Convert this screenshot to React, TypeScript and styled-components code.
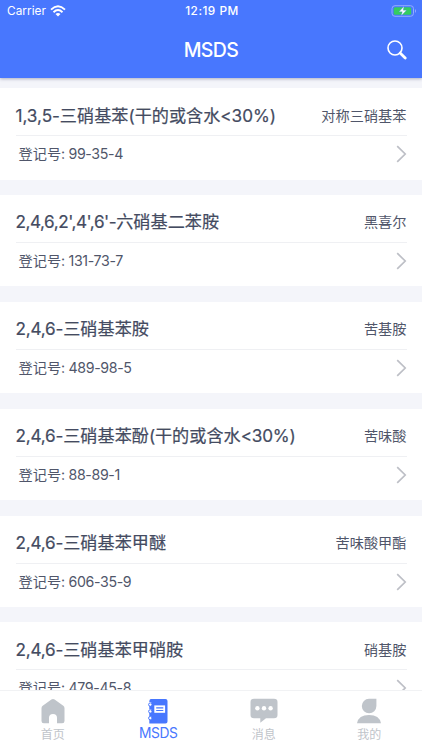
import React from 'react';
import styled, { createGlobalStyle } from 'styled-components';

const GlobalStyle = createGlobalStyle`
  *, *::before, *::after { box-sizing: border-box; }
  html, body, #root { height: 100%; margin: 0; }
  body {
    overflow: hidden;
    font-family: Inter, "Noto Sans CJK SC", sans-serif;
    background: #f4f5fa;
  }
`;

const Screen = styled.div`
  display: flex;
  flex-direction: column;
  width: 422px;
  height: 750px;
  overflow: hidden;
  background: #f4f5fa;
`;

const Header = styled.header`
  flex: none;
  height: 78px;
  color: #fff;
  background: #4877fe;
  box-shadow: 0 1px 3px rgba(40, 50, 90, 0.35);
  z-index: 1;
`;

const StatusBar = styled.div`
  display: grid;
  grid-template-columns: 1fr auto 1fr;
  align-items: center;
  height: 22px;
  padding: 0 5px 0 7px;
  font-size: 11.8px;
  line-height: 22px;
`;

const Carrier = styled.div`
  display: flex;
  align-items: center;
  gap: 4px;
  letter-spacing: 0.05px;
`;

const Clock = styled.div`
  font-weight: 500;
  letter-spacing: 0.5px;
`;

const BatterySlot = styled.div`
  display: flex;
  justify-content: flex-end;
`;

const NavBar = styled.div`
  display: grid;
  grid-template-columns: 1fr auto 1fr;
  align-items: center;
  height: 55px;
  padding: 0 15px;
`;

const NavTitle = styled.h1`
  grid-column: 2;
  margin: 0;
  font-size: 19.5px;
  font-weight: 500;
  letter-spacing: -0.6px;
`;

const IconButton = styled.button`
  justify-self: end;
  display: flex;
  padding: 0;
  border: 0;
  background: none;
`;

const List = styled.main`
  flex: 1;
  min-height: 0;
  display: flex;
  flex-direction: column;
  gap: 15.3px;
  padding-top: 10px;
  overflow: hidden;
`;

const Card = styled.article`
  flex: none;
  height: 91.6px;
  padding: 0 15.5px;
  background: #fff;
  color: #444b61;
`;

const CardHead = styled.div`
  display: flex;
  align-items: center;
  justify-content: space-between;
  height: 48px;
  padding-top: 8px;
  border-bottom: 1px solid #eff0f3;
`;

const Name = styled.h2`
  margin: 0;
  font-size: 17.15px;
  font-weight: 400;
  line-height: 24px;
  white-space: nowrap;
  -webkit-text-stroke: 0.2px currentColor;
`;

const Latin = styled.span<{ $tracking: number }>`
  letter-spacing: ${(p) => p.$tracking}px;
`;

const Alias = styled.span`
  font-size: 14.2px;
  line-height: 20px;
  color: #50566a;
`;

const CardBody = styled.div`
  display: flex;
  align-items: center;
  justify-content: space-between;
  height: 36px;
  padding-left: 3px;
  font-size: 14.2px;
  line-height: 20px;
  color: #50566a;
`;

const TabBar = styled.nav`
  flex: none;
  display: grid;
  grid-template-columns: repeat(4, 1fr);
  height: 60px;
  background: #fff;
  border-top: 1px solid #f1f2f4;
`;

const Tab = styled.a<{ $active?: boolean }>`
  display: flex;
  flex-direction: column;
  align-items: center;
  padding-top: 7px;
  color: ${(p) => (p.$active ? '#4877fe' : '#bfc4ca')};
`;

const TabLabel = styled.span<{ $large?: boolean }>`
  font-size: ${(p) => (p.$large ? 13.8 : 12)}px;
  line-height: 18px;
  letter-spacing: ${(p) => (p.$large ? -0.35 : 0)}px;
  margin-top: ${(p) => (p.$large ? -0.5 : 1.5)}px;
`;

const WifiIcon = () => (
  <svg width="16" height="12" viewBox="0 0 16 12" fill="none" stroke="#fff" strokeWidth="1.9">
    <path d="M1 4.6Q8-2 15 4.6M3.5 7.2Q8 3 12.5 7.2" />
    <path d="M8 11.6L5.5 9Q8 7 10.5 9Z" fill="#fff" stroke="none" />
  </svg>
);

const BatteryIcon = () => (
  <svg width="26" height="12" viewBox="0 0 26 12">
    <rect x="1" y="0.7" width="21.5" height="10.6" rx="3" fill="none" stroke="#93adff" strokeWidth="1" />
    <path d="M24 4Q26 6 24 8Z" fill="#93adff" />
    <rect x="2.7" y="2.2" width="17.5" height="7.6" rx="1.5" fill="#35cc60" />
    <path d="M13 1.3L8 6.8H11.3L10.2 10.8L15.5 5.2H12.2Z" fill="#fff" stroke="#4877fe" strokeWidth="0.3" />
  </svg>
);

const SearchIcon = () => (
  <svg width="20" height="20" viewBox="0 0 20 20" fill="none" stroke="#fff" strokeLinecap="round">
    <circle cx="8" cy="8" r="7" strokeWidth="1.6" />
    <path d="M13.1 13.1L18.2 18" strokeWidth="2.8" />
  </svg>
);

const Chevron = () => (
  <svg width="11" height="18" viewBox="0 0 11 18" fill="none" stroke="#bdbfc6" strokeWidth="1.7">
    <path d="M1.2 1.2L9.2 9L1.2 16.8" />
  </svg>
);

const HomeIcon = () => (
  <svg width="24" height="26" viewBox="0 0 24 26" fill="currentColor">
    <path d="M10.4 1.5Q12 .5 13.6 1.5L22.3 7.8Q23.5 8.7 23.5 10.2V23Q23.5 25.3 21.2 25.3H16V19.8Q16 16 12 16T8 19.8V25.3H2.8Q.5 25.3 .5 23V10.2Q.5 8.7 1.7 7.8Z" />
  </svg>
);

const NotebookIcon = () => (
  <svg width="20" height="26" viewBox="0 0 20 26">
    <path d="M3 1H17.5Q19.5 1 19.5 3V23.5Q19.5 25.5 17.5 25.5H1.3V21.5H3.2V18H1.3V14.8H3.2V11H1.3V7.8H3.2V4H1.3Q1.3 1 3 1Z" fill="currentColor" />
    <g fill="#fff" stroke="currentColor" strokeWidth="1">
      <circle cx="2.3" cy="6.6" r="1.7" />
      <circle cx="2.3" cy="13.4" r="1.7" />
      <circle cx="2.3" cy="20.1" r="1.7" />
    </g>
    <rect x="6.3" y="7.4" width="10.8" height="7.4" fill="#fff" />
    <path d="M8.2 9.9H15.3M8.2 12.5H15.3" stroke="currentColor" strokeWidth="1.1" />
  </svg>
);

const MessageIcon = () => (
  <svg width="28" height="26" viewBox="0 0 28 26">
    <path d="M4 .7H24Q27.5 .7 27.5 4V17Q27.5 20.2 24 20.2H16L10.3 24.8V20.2H4Q.5 20.2 .5 17V4Q.5 .7 4 .7Z" fill="currentColor" />
    <g fill="#fff">
      <circle cx="7.4" cy="10.3" r="2.2" />
      <circle cx="14" cy="10.3" r="2.2" />
      <circle cx="20.6" cy="10.3" r="2.2" />
    </g>
  </svg>
);

const ProfileIcon = () => (
  <svg width="24" height="26" viewBox="0 0 24 26" fill="currentColor">
    <path d="M12 .7H19.4V8A7.3 7.3 0 1 1 12 .7ZM0 25.3Q1.5 17 12 17T24 25.3Z" />
  </svg>
);

const items = [
  { name: '1,3,5-三硝基苯(干的或含水<30%)', alias: '对称三硝基苯', code: '99-35-4', tracking: -0.05 },
  { name: "2,4,6,2',4',6'-六硝基二苯胺", alias: '黑喜尔', code: '131-73-7', tracking: -0.45 },
  { name: '2,4,6-三硝基苯胺', alias: '苦基胺', code: '489-98-5', tracking: -0.2 },
  { name: '2,4,6-三硝基苯酚(干的或含水<30%)', alias: '苦味酸', code: '88-89-1', tracking: -0.2 },
  { name: '2,4,6-三硝基苯甲醚', alias: '苦味酸甲酯', code: '606-35-9', tracking: -0.2 },
  { name: '2,4,6-三硝基苯甲硝胺', alias: '硝基胺', code: '479-45-8', tracking: -0.2 },
];

const tabs = [
  { label: '首页', icon: <HomeIcon /> },
  { label: 'MSDS', icon: <NotebookIcon />, active: true },
  { label: '消息', icon: <MessageIcon /> },
  { label: '我的', icon: <ProfileIcon /> },
];

const MixedText = ({ text, tracking }: { text: string; tracking: number }) => (
  <>
    {text.split(/([\x20-\x7e]+)/).map((part, i) =>
      i % 2 ? <Latin key={i} $tracking={tracking}>{part}</Latin> : part,
    )}
  </>
);

export default function App() {
  return (
    <>
      <GlobalStyle />
      <Screen>
        <Header>
          <StatusBar>
            <Carrier>Carrier <WifiIcon /></Carrier>
            <Clock>12:19 PM</Clock>
            <BatterySlot><BatteryIcon /></BatterySlot>
          </StatusBar>
          <NavBar>
            <NavTitle>MSDS</NavTitle>
            <IconButton aria-label="搜索"><SearchIcon /></IconButton>
          </NavBar>
        </Header>
        <List>
          {items.map((item) => (
            <Card key={item.code}>
              <CardHead>
                <Name><MixedText text={item.name} tracking={item.tracking} /></Name>
                <Alias>{item.alias}</Alias>
              </CardHead>
              <CardBody>
                <span><MixedText text={`登记号: ${item.code}`} tracking={-0.35} /></span>
                <Chevron />
              </CardBody>
            </Card>
          ))}
        </List>
        <TabBar>
          {tabs.map((tab) => (
            <Tab key={tab.label} $active={tab.active}>
              {tab.icon}
              <TabLabel $large={tab.active}>{tab.label}</TabLabel>
            </Tab>
          ))}
        </TabBar>
      </Screen>
    </>
  );
}
